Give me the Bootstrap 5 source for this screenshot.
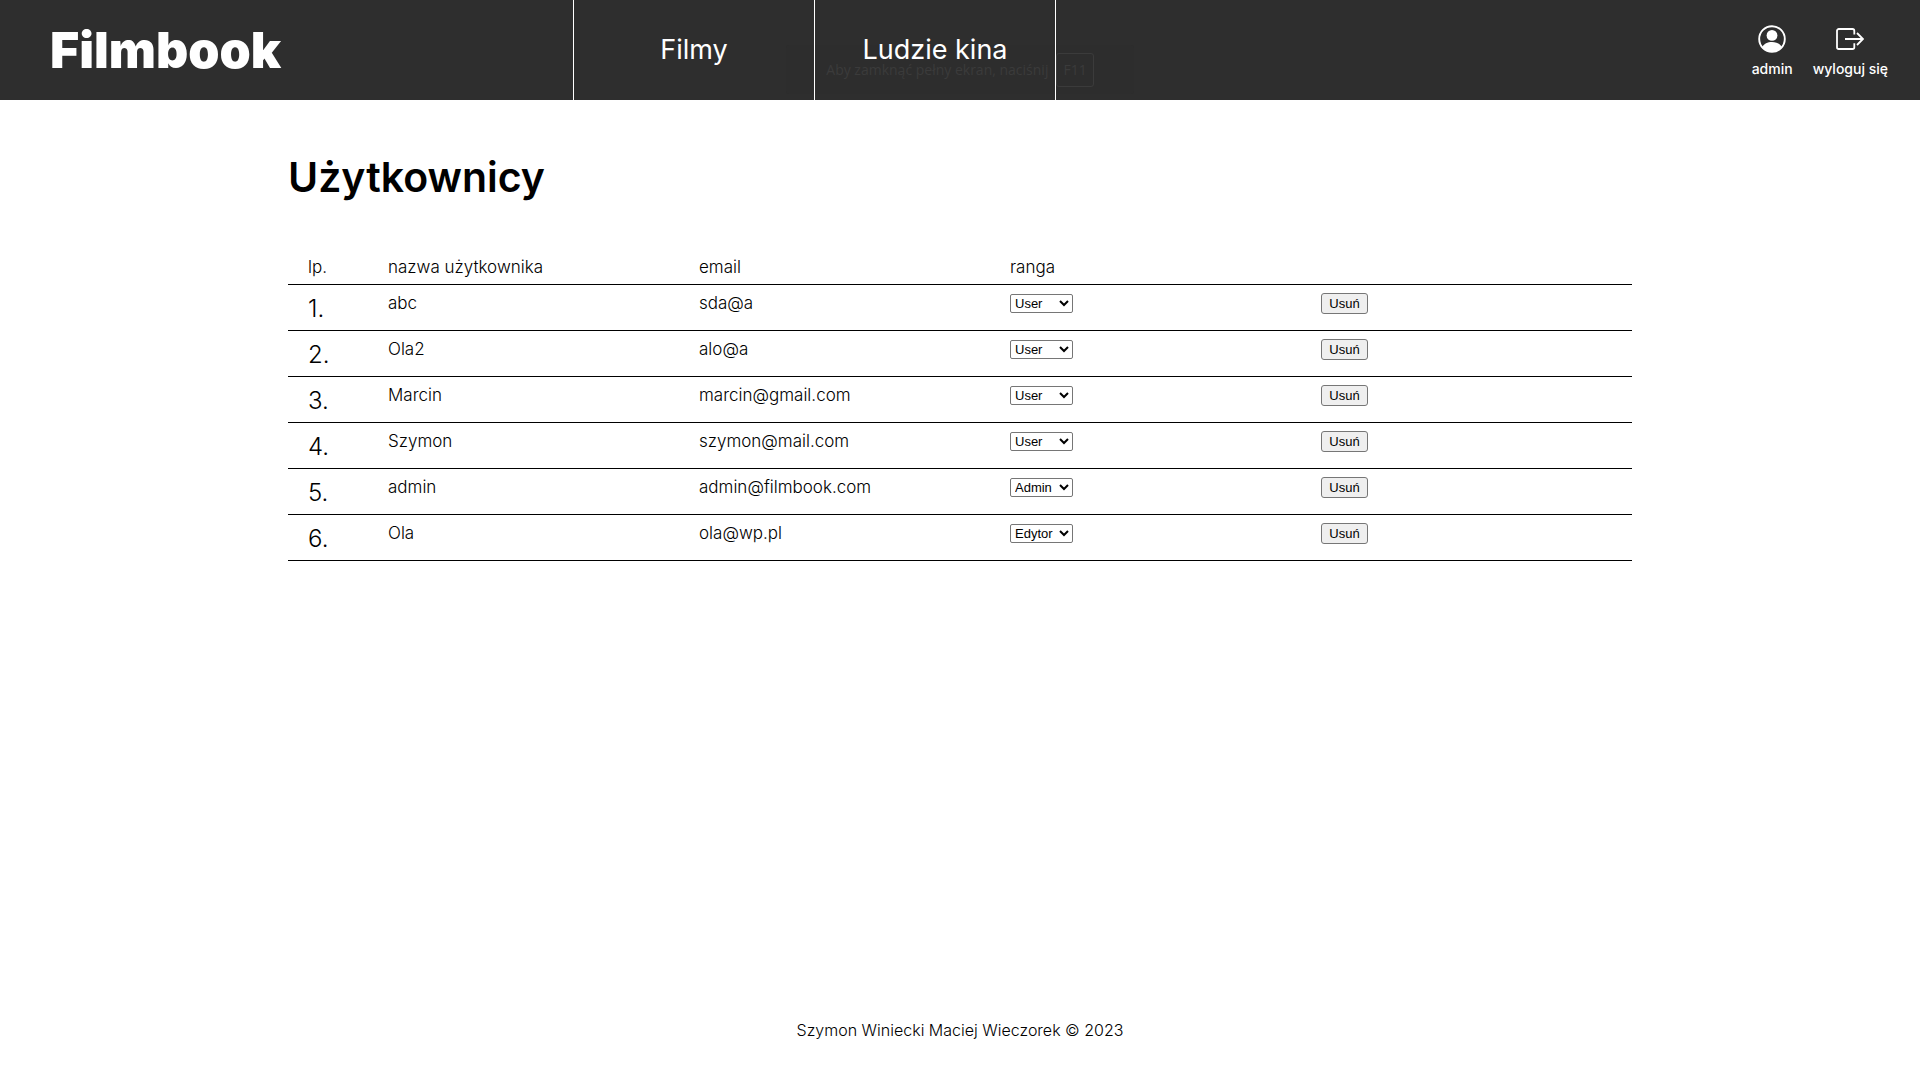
<!DOCTYPE html>
<html lang="pl">
<head>
<meta charset="utf-8">
<meta name="viewport" content="width=device-width, initial-scale=1">
<title>Filmbook</title>
<link href="https://cdn.jsdelivr.net/npm/bootstrap@5.3.0/dist/css/bootstrap.min.css" rel="stylesheet">
<style>
body { font-family: Inter, "Open Sans", sans-serif; font-size: 17px; line-height: 24px; font-weight: 300; color: #000; background: #fff; }
.top-bar { height: 100px; background: #2e2e2e; color: #fff; }
.top-bar a { color: #fff; text-decoration: none; }
.top-side { flex: 1 1 0; }
.top-side.brand-side { flex: 0 0 573px; padding-left: 50px; }
.brand-link { font-size: 50px; line-height: 48px; font-weight: 900; }
.top-bar nav { z-index: 2; }
.main-link { width: 241px; border-right: 1px solid #fff; font-size: 27px; line-height: 40px; font-weight: 400; }
.main-link:first-child { width: 242px; border-left: 1px solid #fff; }
.user-links { gap: 20px; padding: 3px 32px 0 0; }
.user-links a { font-size: 14px; line-height: 20px; font-weight: 500; }
.user-links svg { margin-bottom: 6px; }
.full-note { z-index: 1; top: 45px; left: 50%; transform: translateX(-50%); width: 348px; height: 49px; background: #2d2d2d; color: #3b3b3b; font: 400 14px/24px "Open Sans", sans-serif; border-radius: 3px; pointer-events: none; }
.full-note kbd { background: none; color: inherit; font: inherit; border: 1px solid #3b3b3b; border-radius: 3px; padding: 4px 6px; }
.content-area { width: 70%; }
.page-title { font-size: 41px; line-height: 60px; font-weight: 600; margin: 47px 0 43px; }
.users { table-layout: fixed; width: 100%; border-collapse: collapse; }
.users tr { border-bottom: 1px solid #000; }
.users th { font-weight: 300; padding: 5px 0; }
.users td { vertical-align: top; padding: 6px 0 3px; }
.users th:first-child, .users td:first-child { width: 100px; padding-left: 20px; }
.users td:first-child { font-size: 24px; line-height: 36px; }
.users select { display: block; width: 63px; height: 19px; margin-top: 3px; font: 13px "Liberation Sans", Arial, sans-serif; color: #000; background: #fff; border: 1px solid #767676; border-radius: 2px; }
.users button { display: block; width: 47px; height: 21px; margin-top: 2px; padding: 0; font: 13px "Liberation Sans", Arial, sans-serif; color: #000; background: #efefef; border: 1px solid #767676; border-radius: 3px; }
.site-footer { font-size: 16px; padding-bottom: 38px; }
</style>
<script src="https://cdn.jsdelivr.net/npm/bootstrap@5.3.0/dist/js/bootstrap.bundle.min.js"></script>
</head>
<body class="d-flex flex-column min-vh-100">
<header class="top-bar d-flex position-relative">
  <div class="top-side brand-side d-flex align-items-center"><a class="brand-link" href="#">Filmbook</a></div>
  <nav class="d-flex position-relative">
    <a class="main-link d-flex align-items-center justify-content-center" href="#">Filmy</a>
    <a class="main-link d-flex align-items-center justify-content-center" href="#">Ludzie kina</a>
  </nav>
  <div class="top-side user-links d-flex align-items-center justify-content-end">
    <a class="d-flex flex-column align-items-center" href="#">
      <svg width="28" height="28" viewBox="0 0 28 28" aria-hidden="true"><defs><clipPath id="face"><circle cx="14" cy="14" r="13"/></clipPath></defs><circle cx="14" cy="14" r="12.8" fill="none" stroke="#fff" stroke-width="1.9"/><circle cx="14" cy="10.4" r="5.4" fill="#fff"/><path clip-path="url(#face)" d="M4 22.500C6 18.500 9.500 17 14 17s8 1.500 10 5.500V28H4z" fill="#fff"/></svg>
      admin</a>
    <a class="d-flex flex-column align-items-center" href="#">
      <svg width="28" height="28" viewBox="0 0 28 28" fill="none" stroke="#fff" stroke-width="1.8" aria-hidden="true"><path d="M18.300 9.500V5.800a1.800 1.800 0 0 0-1.800-1.800H2.800A1.800 1.800 0 0 0 1 5.800v16.400A1.800 1.800 0 0 0 2.800 24h13.700a1.800 1.800 0 0 0 1.800-1.800v-4M9 14h17.500M21 8l6 6-6 6"/></svg>
      wyloguj się</a>
  </div>
  <div class="full-note position-absolute d-flex align-items-center justify-content-center gap-2"><span>Aby zamknąć pełny ekran, naciśnij</span><kbd>F11</kbd></div>
</header>
<main class="content-area mx-auto flex-grow-1">
  <h1 class="page-title">Użytkownicy</h1>
  <table class="users">
    <thead><tr><th>lp.</th><th>nazwa użytkownika</th><th>email</th><th>ranga</th><th></th></tr></thead>
    <tbody>
      <tr><td>1.</td><td>abc</td><td>sda@a</td><td><select aria-label="Ranga: abc"><option selected>User</option><option>Edytor</option><option>Admin</option></select></td><td><button type="button">Usuń</button></td></tr>
      <tr><td>2.</td><td>Ola2</td><td>alo@a</td><td><select aria-label="Ranga: Ola2"><option selected>User</option><option>Edytor</option><option>Admin</option></select></td><td><button type="button">Usuń</button></td></tr>
      <tr><td>3.</td><td>Marcin</td><td>marcin@gmail.com</td><td><select aria-label="Ranga: Marcin"><option selected>User</option><option>Edytor</option><option>Admin</option></select></td><td><button type="button">Usuń</button></td></tr>
      <tr><td>4.</td><td>Szymon</td><td>szymon@mail.com</td><td><select aria-label="Ranga: Szymon"><option selected>User</option><option>Edytor</option><option>Admin</option></select></td><td><button type="button">Usuń</button></td></tr>
      <tr><td>5.</td><td>admin</td><td>admin@filmbook.com</td><td><select aria-label="Ranga: admin"><option>User</option><option>Edytor</option><option selected>Admin</option></select></td><td><button type="button">Usuń</button></td></tr>
      <tr><td>6.</td><td>Ola</td><td>ola@wp.pl</td><td><select aria-label="Ranga: Ola"><option>User</option><option selected>Edytor</option><option>Admin</option></select></td><td><button type="button">Usuń</button></td></tr>
    </tbody>
  </table>
</main>
<footer class="site-footer text-center">Szymon Winiecki Maciej Wieczorek © 2023</footer>
</body>
</html>
